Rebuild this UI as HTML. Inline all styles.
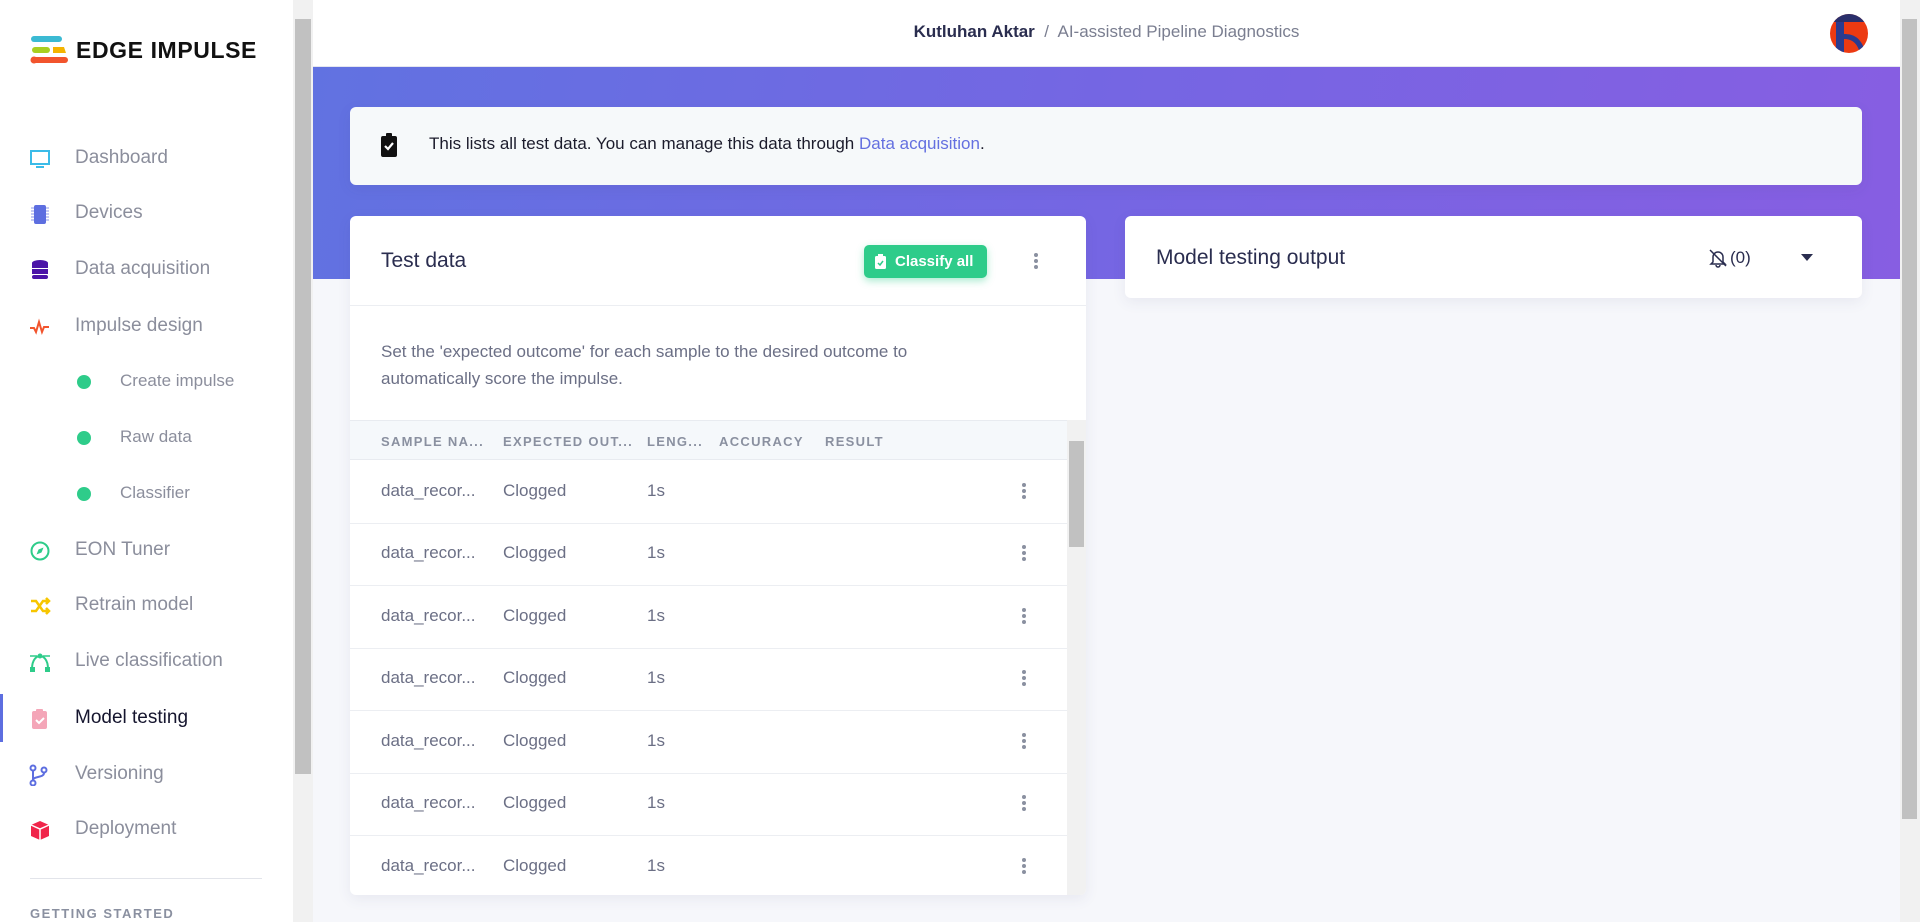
<!DOCTYPE html>
<html><head><meta charset="utf-8"><style>
*{box-sizing:border-box;margin:0;padding:0}
body{width:1920px;height:922px;overflow:hidden;font-family:"Liberation Sans",sans-serif;background:#f6f7fb;position:relative}
.side{position:absolute;left:0;top:0;width:293px;height:922px;background:#fff}
.sbar{position:absolute;left:293px;top:0;width:20px;height:922px;background:#f1f1f1}
.sbar .th{position:absolute;left:2px;top:19px;width:16px;height:755px;background:#c1c1c1}
.nav{position:absolute;left:0;width:293px;height:40px;display:flex;align-items:center;font-size:19px;color:#8b8e9c}
.nav .ic{position:absolute;left:29px;top:10px;width:22px;height:22px}
.nav span{position:absolute;left:75px}
.nav.sub span{left:120px;font-size:17px}
.dot{position:absolute;left:77px;top:14px;width:14px;height:14px;border-radius:50%;background:#2ecc8a}
.top{position:absolute;left:313px;top:0;width:1587px;height:67px;background:#fff;border-bottom:1px solid #e4e6f0}
.band{position:absolute;left:313px;top:67px;width:1587px;height:212px;background:linear-gradient(100deg,#6172e1 0%,#7566e3 50%,#875ee2 100%)}
.vs{position:absolute;left:1900px;top:0;width:20px;height:922px;background:#f1f1f1}
.vs .th{position:absolute;left:2px;top:19px;width:15px;height:800px;background:#c1c1c1}
.card{position:absolute;background:#fff;border-radius:6px;box-shadow:0 4px 14px rgba(60,70,120,.08)}
.th-row{position:absolute;left:0;width:717px;background:#f5f8fb;border-top:1px solid #e8ebf0;border-bottom:1px solid #e8ebf0}
.hd{position:absolute;top:13px;font-size:13px;letter-spacing:1.3px;color:#8a90a0;font-weight:bold}
.row{position:absolute;left:0;width:717px;height:62.5px;border-bottom:1px solid #eceef2;font-size:17px;color:#6b6f85}
.row div{position:absolute;top:20px}
.keb{position:absolute;width:4px}
.keb i{display:block;width:4px;height:4px;border-radius:50%;background:#8a90a0;margin-bottom:2px}
</style></head><body>
<div class="side">
  <svg style="position:absolute;left:30px;top:36px" width="40" height="28" viewBox="0 0 40 28">
    <rect x="2" y="0" width="30" height="6" rx="3" fill="#3bbad3"/><circle cx="4" cy="3" r="3" fill="#3bbad3"/>
    <rect x="2" y="11" width="18" height="6" rx="3" fill="#a9cf1f"/><path d="M23 11h11l2 6H23z" fill="#f4b400"/>
    <rect x="2" y="21" width="36" height="6" rx="3" fill="#f2542d"/><circle cx="4" cy="24" r="3.5" fill="#f2542d"/>
  </svg>
  <div style="position:absolute;left:76px;top:37px;font-size:23px;font-weight:bold;letter-spacing:0.6px;color:#111">EDGE IMPULSE</div>

  <div class="nav" style="top:138px"><svg class="ic" viewBox="0 0 22 22"><rect x="2" y="3" width="18" height="13" fill="none" stroke="#3bbbe8" stroke-width="2"/><rect x="7" y="18" width="8" height="2" fill="#3bbbe8"/></svg><span>Dashboard</span></div>
  <div class="nav" style="top:193px"><svg class="ic" viewBox="0 0 22 22"><rect x="5" y="2" width="12" height="19" rx="2" fill="#5d6ee0"/><path d="M2 5h3M2 8h3M2 11h3M2 14h3M2 17h3M17 5h3M17 8h3M17 11h3M17 14h3M17 17h3" stroke="#8d97ea" stroke-width="1"/></svg><span>Devices</span></div>
  <div class="nav" style="top:249px"><svg class="ic" viewBox="0 0 22 22"><ellipse cx="11" cy="4" rx="8" ry="3" fill="#4b14a8"/><rect x="3" y="4" width="16" height="5" fill="#4b14a8"/><rect x="3" y="10" width="16" height="5" fill="#4b14a8"/><rect x="3" y="16" width="16" height="4" rx="2" fill="#4b14a8"/></svg><span>Data acquisition</span></div>
  <div class="nav" style="top:306px"><svg class="ic" viewBox="0 0 22 22"><path d="M1 12h4l2 4 3-10 3 10 2-5h5" fill="none" stroke="#f2542d" stroke-width="2"/></svg><span>Impulse design</span></div>
  <div class="nav sub" style="top:361px"><i class="dot"></i><span>Create impulse</span></div>
  <div class="nav sub" style="top:417px"><i class="dot"></i><span>Raw data</span></div>
  <div class="nav sub" style="top:473px"><i class="dot"></i><span>Classifier</span></div>
  <div class="nav" style="top:530px"><svg class="ic" viewBox="0 0 22 22"><circle cx="11" cy="11" r="8.5" fill="none" stroke="#2ecc8a" stroke-width="2"/><path d="M14.5 7.5l-2 5-5 2 2-5z" fill="#2ecc8a"/></svg><span>EON Tuner</span></div>
  <div class="nav" style="top:585px"><svg class="ic" viewBox="0 0 22 22"><path d="M2 6h5l7 10h5M2 16h5l7-10h5M17 3l3 3-3 3M17 13l3 3-3 3" fill="none" stroke="#f7c600" stroke-width="2.5"/></svg><span>Retrain model</span></div>
  <div class="nav" style="top:641px"><svg class="ic" viewBox="0 0 22 22"><path d="M3 18C3 8 8 5 11 5s8 3 8 13" fill="none" stroke="#2ecc8a" stroke-width="2"/><rect x="1" y="16" width="5" height="5" fill="#2ecc8a"/><rect x="16" y="16" width="5" height="5" fill="#2ecc8a"/><circle cx="11" cy="5" r="2.5" fill="#2ecc8a"/><path d="M1 5h7M14 5h7" stroke="#2ecc8a" stroke-width="1.5"/></svg><span>Live classification</span></div>
  <div style="position:absolute;left:0;top:694px;width:3px;height:48px;background:#5d6ee0"></div>
  <div class="nav" style="top:698px;color:#15152e"><svg class="ic" viewBox="0 0 22 22"><rect x="3" y="3" width="15" height="18" rx="2" fill="#f4a6b8"/><rect x="7" y="1" width="7" height="4" rx="1" fill="#f4a6b8"/><path d="M7 12l3 3 5-5" fill="none" stroke="#fff" stroke-width="2"/></svg><span>Model testing</span></div>
  <div class="nav" style="top:754px"><svg class="ic" viewBox="0 0 22 22"><circle cx="4" cy="4" r="2.5" fill="none" stroke="#5d6ee0" stroke-width="2"/><circle cx="4" cy="19" r="2.5" fill="none" stroke="#5d6ee0" stroke-width="2"/><circle cx="15" cy="6" r="2.5" fill="none" stroke="#5d6ee0" stroke-width="2"/><path d="M4 7v9M15 9c0 5-11 3-11 7" fill="none" stroke="#5d6ee0" stroke-width="2"/></svg><span>Versioning</span></div>
  <div class="nav" style="top:809px"><svg class="ic" viewBox="0 0 22 22"><path d="M11 2l9 4v11l-9 4-9-4V6z" fill="#f0244a"/><path d="M2 6l9 4 9-4M11 10v11" stroke="#fff" stroke-width="1.5" fill="none"/></svg><span>Deployment</span></div>
  <div style="position:absolute;left:30px;top:878px;width:232px;height:1px;background:#e2e4ea"></div>
  <div style="position:absolute;left:30px;top:906px;font-size:13px;font-weight:bold;letter-spacing:1.5px;color:#8a90a0">GETTING STARTED</div>
</div>
<div class="sbar"><div class="th"></div></div>

<div class="top">
  <div style="position:absolute;left:0;width:1587px;top:22px;text-align:center;font-size:17px;color:#7a7e90"><b style="color:#2a2d4f;font-weight:600">Kutluhan Aktar</b> &nbsp;/&nbsp; AI-assisted Pipeline Diagnostics</div>
  <svg style="position:absolute;left:1517px;top:14px" width="38" height="39" viewBox="0 0 38 39"><defs><clipPath id="c"><ellipse cx="19" cy="19.5" rx="19" ry="19.5"/></clipPath></defs><g clip-path="url(#c)"><rect width="38" height="39" fill="#ec3a12"/><rect width="38" height="8" fill="#2a2f6b"/><rect x="6" y="8" width="8" height="31" fill="#2a3b8f"/><path d="M14 20c10 0 16 4 20 14l-5 2c-3-8-8-11-15-11z" fill="#2a3b8f"/></g></svg>
</div>
<div class="band"></div>
<div class="vs"><div class="th"></div></div>

<div class="card" style="left:350px;top:107px;width:1512px;height:78px;background:#f6f9fa">
  <svg style="position:absolute;left:31px;top:26px" width="16" height="24" viewBox="0 0 16 24"><rect x="0" y="3" width="16" height="21" rx="2" fill="#111"/><rect x="5" y="0" width="6" height="5" rx="1" fill="#111"/><path d="M4 13l3 3 5-6" fill="none" stroke="#fff" stroke-width="2.2"/></svg>
  <div style="position:absolute;left:79px;top:27px;font-size:17px;color:#1c1c2c">This lists all test data. You can manage this data through <span style="color:#6470e0">Data acquisition</span>.</div>
</div>

<div class="card" style="left:350px;top:216px;width:736px;height:679px;overflow:hidden">
  <div style="position:absolute;left:31px;top:33px;font-size:21px;color:#2a2d4f">Test data</div>
  <div style="position:absolute;left:514px;top:29px;width:123px;height:33px;background:#2ecc8a;border-radius:5px;box-shadow:0 3px 8px rgba(46,204,138,.4);color:#fff;font-size:15px;font-weight:bold;padding:8px 0 0 31px">Classify all
    <svg style="position:absolute;left:11px;top:9px" width="11" height="15" viewBox="0 0 11 15"><rect x="0" y="2" width="11" height="13" rx="1.5" fill="#fff"/><rect x="3" y="0" width="5" height="3" fill="#fff"/><path d="M3 9l2 2 3-4" fill="none" stroke="#2ecc8a" stroke-width="1.5"/></svg></div>
  <div class="keb" style="left:684px;top:37px"><i></i><i></i><i></i></div>
  <div style="position:absolute;left:0;top:89px;width:736px;height:1px;background:#eceef2"></div>
  <div style="position:absolute;left:31px;top:122px;font-size:17px;line-height:27px;color:#6b6f85;width:620px">Set the 'expected outcome' for each sample to the desired outcome to automatically score the impulse.</div>
  <div class="th-row" style="top:204px;height:40px">
    <div class="hd" style="left:31px">SAMPLE NA...</div><div class="hd" style="left:153px">EXPECTED OUT...</div><div class="hd" style="left:297px">LENG...</div><div class="hd" style="left:369px">ACCURACY</div><div class="hd" style="left:475px">RESULT</div>
  </div>
  <div class="row" style="top:245px"><div style="left:31px">data_recor...</div><div style="left:153px">Clogged</div><div style="left:297px">1s</div><span class="keb" style="left:672px;top:22px"><i></i><i></i><i></i></span></div>
  <div class="row" style="top:307px"><div style="left:31px">data_recor...</div><div style="left:153px">Clogged</div><div style="left:297px">1s</div><span class="keb" style="left:672px;top:22px"><i></i><i></i><i></i></span></div>
  <div class="row" style="top:370px"><div style="left:31px">data_recor...</div><div style="left:153px">Clogged</div><div style="left:297px">1s</div><span class="keb" style="left:672px;top:22px"><i></i><i></i><i></i></span></div>
  <div class="row" style="top:432px"><div style="left:31px">data_recor...</div><div style="left:153px">Clogged</div><div style="left:297px">1s</div><span class="keb" style="left:672px;top:22px"><i></i><i></i><i></i></span></div>
  <div class="row" style="top:495px"><div style="left:31px">data_recor...</div><div style="left:153px">Clogged</div><div style="left:297px">1s</div><span class="keb" style="left:672px;top:22px"><i></i><i></i><i></i></span></div>
  <div class="row" style="top:557px"><div style="left:31px">data_recor...</div><div style="left:153px">Clogged</div><div style="left:297px">1s</div><span class="keb" style="left:672px;top:22px"><i></i><i></i><i></i></span></div>
  <div class="row" style="top:620px;border:0"><div style="left:31px">data_recor...</div><div style="left:153px">Clogged</div><div style="left:297px">1s</div><span class="keb" style="left:672px;top:22px"><i></i><i></i><i></i></span></div>
  <div style="position:absolute;left:717px;top:204px;width:19px;height:475px;background:#f1f1f1"><div style="position:absolute;left:2px;top:21px;width:15px;height:106px;background:#c1c1c1"></div></div>
</div>

<div class="card" style="left:1125px;top:216px;width:737px;height:82px">
  <div style="position:absolute;left:31px;top:30px;font-size:21px;color:#2a2d4f">Model testing output</div>
  <svg style="position:absolute;left:583px;top:32px" width="20" height="20" viewBox="0 0 20 20"><path d="M5 14V9a5 5 0 0 1 10 0v5l2 2H3z M8 17a2 2 0 0 0 4 0" fill="none" stroke="#2a2d4f" stroke-width="1.5"/><path d="M2 2l16 16" stroke="#2a2d4f" stroke-width="1.5"/></svg>
  <div style="position:absolute;left:605px;top:32px;font-size:17px;color:#2a2d4f">(0)</div>
  <div style="position:absolute;left:676px;top:38px;width:0;height:0;border-left:6px solid transparent;border-right:6px solid transparent;border-top:7px solid #2a2d4f"></div>
</div>
</body></html>
